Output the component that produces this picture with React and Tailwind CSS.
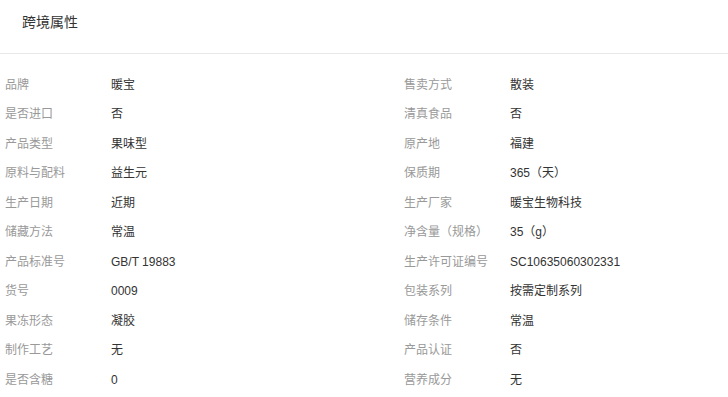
import React from "react";

const rows = [
  ["品牌", "暖宝", "售卖方式", "散装"],
  ["是否进口", "否", "清真食品", "否"],
  ["产品类型", "果味型", "原产地", "福建"],
  ["原料与配料", "益生元", "保质期", "365（天）"],
  ["生产日期", "近期", "生产厂家", "暖宝生物科技"],
  ["储藏方法", "常温", "净含量（规格）", "35（g）"],
  ["产品标准号", "GB/T 19883", "生产许可证编号", "SC10635060302331"],
  ["货号", "0009", "包装系列", "按需定制系列"],
  ["果冻形态", "凝胶", "储存条件", "常温"],
  ["制作工艺", "无", "产品认证", "否"],
  ["是否含糖", "0", "营养成分", "无"],
];

function Attr({ label, value, wide }) {
  return (
    <div className={`flex items-center h-[29.5px] ${wide ? "w-[399px]" : "flex-1"}`}>
      <span className="w-[106px] shrink-0 text-[#999999]">{label}</span>
      <span className="text-[#333333]">{value}</span>
    </div>
  );
}

export default function App() {
  return (
    <div
      className="w-[728px] h-[397px] bg-white overflow-hidden text-[12px] leading-[16px]"
      style={{ fontFamily: '"Liberation Sans", "Noto Sans CJK SC", sans-serif' }}
    >
      <div className="h-[54px] border-b border-[#e8e8e8] pt-[12px] pl-[22px]">
        <h2 className="text-[14px] leading-[20px] text-[#333333]">跨境属性</h2>
      </div>
      <div className="pt-[16px] pl-[5px]">
        {rows.map(([l1, v1, l2, v2]) => (
          <div key={l1} className="flex">
            <Attr label={l1} value={v1} wide />
            <Attr label={l2} value={v2} />
          </div>
        ))}
      </div>
    </div>
  );
}
